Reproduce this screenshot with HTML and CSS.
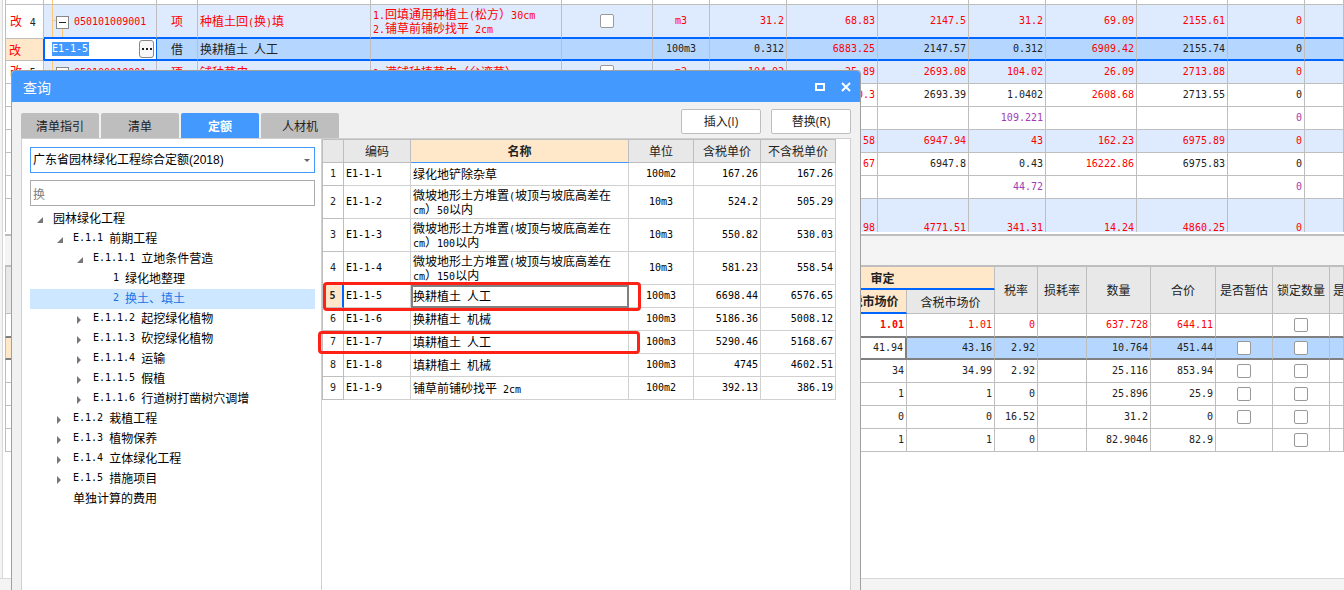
FILE: index.html
```html
<!DOCTYPE html>
<html lang="zh-CN">
<head>
<meta charset="utf-8">
<title>查询</title>
<link rel="stylesheet" href="styles.css">
</head>
<body>
<main class="app">
  <div class="gutter"></div>
  <div class="work">
    <section class="upper">
      <table class="grid bill">
        <colgroup><col class="w38"><col class="w113"><col class="w41"><col class="w173"><col class="w191"><col class="w91"><col class="w57"><col class="w77"><col class="w91"><col class="w91"><col class="w77"><col class="w91"><col class="w91"><col class="w77"><col></colgroup>
        <tbody>
        <tr class="sliver"><td></td><td><i class="branch"></i></td><td></td><td></td><td></td><td></td><td></td><td></td><td></td><td></td><td></td><td></td><td></td><td></td><td></td></tr>
        <tr class="item tall edge">
          <td class="rowno">改 <b class="n num">4</b></td>
          <td class="code"><i class="branch"></i><i class="twig"></i><i class="drop"></i><svg class="fold" viewBox="0 0 13 13"><rect x=".5" y=".5" width="12" height="12"/><path d="M3 6.5h7"/></svg><span class="n">050101009001</span></td>
          <td class="c">项</td><td>种植土回<span class="n">(</span>换<span class="n">)</span>填</td>
          <td class="lines"><span class="n">1.</span>回填通用种植土<span class="n">(</span>松方）<span class="n">30cm</span><br><span class="n">2.</span>铺草前铺砂找平<span class="n"> 2cm</span></td>
          <td class="c"><input type="checkbox" aria-label="选择第4行"></td><td class="c n">m3</td><td class="r n">31.2</td><td class="r n">68.83</td><td class="r n">2147.5</td><td class="r n">31.2</td><td class="r n">69.09</td><td class="r n">2155.61</td><td class="r n">0</td><td></td>
        </tr>
        <tr class="current edge">
          <td class="rowno mark">改</td>
          <td class="editing"><div class="editor"><input class="n" type="text" value="E1-1-5" aria-label="编码"><button type="button" aria-label="选择定额"><svg viewBox="0 0 13 16"><path d="M2 8h2M6 8h2M10 8h2"/></svg></button></div></td>
          <td class="c">借</td><td>换耕植土<span class="n"> </span>人工</td><td></td><td></td><td class="c n">100m3</td><td class="r n">0.312</td><td class="r n red">6883.25</td><td class="r n">2147.57</td><td class="r n">0.312</td><td class="r n red">6909.42</td><td class="r n">2155.74</td><td class="r n">0</td><td></td>
        </tr>
        <tr class="item">
          <td class="rowno">改 <b class="n num">5</b></td>
          <td class="code"><i class="branch"></i><svg class="fold" viewBox="0 0 13 13"><rect x=".5" y=".5" width="12" height="12"/><path d="M3 6.5h7"/></svg><span class="n">050100010001</span></td>
          <td class="c">项</td><td>铺种草皮</td><td><span class="n">1.</span>满铺种植草皮（台湾草）</td><td class="c"><input type="checkbox" aria-label="选择第5行"></td><td class="c n">m2</td><td class="r n">104.02</td><td class="r n">25.89</td><td class="r n">2693.08</td><td class="r n">104.02</td><td class="r n">26.09</td><td class="r n">2713.88</td><td class="r n">0</td><td></td>
        </tr>
        <tr><td></td><td></td><td></td><td></td><td></td><td></td><td></td><td></td><td class="r n red">2590.3</td><td class="r n">2693.39</td><td class="r n">1.0402</td><td class="r n red">2608.68</td><td class="r n">2713.55</td><td class="r n">0</td><td></td></tr>
        <tr class="purple"><td></td><td></td><td></td><td></td><td></td><td></td><td></td><td></td><td></td><td></td><td class="r n">109.221</td><td></td><td></td><td class="r n">0</td><td></td></tr>
        <tr class="item"><td class="rowno"></td><td></td><td></td><td></td><td></td><td></td><td></td><td></td><td class="r n">161.58</td><td class="r n">6947.94</td><td class="r n">43</td><td class="r n">162.23</td><td class="r n">6975.89</td><td class="r n">0</td><td></td></tr>
        <tr><td></td><td></td><td></td><td></td><td></td><td></td><td></td><td></td><td class="r n red">16157.67</td><td class="r n">6947.8</td><td class="r n">0.43</td><td class="r n red">16222.86</td><td class="r n">6975.83</td><td class="r n">0</td><td></td></tr>
        <tr class="purple"><td></td><td></td><td></td><td></td><td></td><td></td><td></td><td></td><td></td><td></td><td class="r n">44.72</td><td></td><td></td><td class="r n">0</td><td></td></tr>
        <tr class="item taller"><td class="rowno"></td><td></td><td></td><td></td><td></td><td></td><td></td><td></td><td class="r n">13.98</td><td class="r n">4771.51</td><td class="r n">341.31</td><td class="r n">14.24</td><td class="r n">4860.25</td><td class="r n">0</td><td></td></tr>
        </tbody>
      </table>
    </section>
    <div class="splitter"></div>
    <section class="lower">
      <table class="grid res">
        <colgroup><col class="w38"><col class="w727"><col class="w48"><col class="w88"><col class="w88"><col class="w43"><col class="w49"><col class="w64"><col class="w65"><col class="w57"><col class="w57"><col></colgroup>
        <thead>
        <tr class="h1"><th rowspan="2"></th><th rowspan="2"></th><th colspan="3" class="hot">审定</th><th rowspan="2">税率</th><th rowspan="2">损耗率</th><th rowspan="2">数量</th><th rowspan="2">合价</th><th rowspan="2">是否暂估</th><th rowspan="2">锁定数量</th><th rowspan="2" class="cut">是否</th></tr>
        <tr class="h2"><th></th><th class="hot">不含税市场价</th><th>含税市场价</th></tr>
        </thead>
        <tbody>
        <tr class="red grayedge"><td></td><td></td><td></td><td class="r n strong">1.01</td><td class="r n">1.01</td><td class="r n">0</td><td></td><td class="r n">637.728</td><td class="r n">644.11</td><td></td><td class="c"><input type="checkbox" aria-label="锁定数量 1"></td><td></td></tr>
        <tr class="picked grayedge"><td class="mark"></td><td></td><td></td><td class="r n cell">41.94</td><td class="r n">43.16</td><td class="r n">2.92</td><td></td><td class="r n">10.764</td><td class="r n">451.44</td><td class="c"><input type="checkbox" aria-label="是否暂估 2"></td><td class="c"><input type="checkbox" aria-label="锁定数量 2"></td><td></td></tr>
        <tr><td></td><td></td><td></td><td class="r n">34</td><td class="r n">34.99</td><td class="r n">2.92</td><td></td><td class="r n">25.116</td><td class="r n">853.94</td><td class="c"><input type="checkbox" aria-label="是否暂估 3"></td><td class="c"><input type="checkbox" aria-label="锁定数量 3"></td><td></td></tr>
        <tr><td></td><td></td><td></td><td class="r n">1</td><td class="r n">1</td><td class="r n">0</td><td></td><td class="r n">25.896</td><td class="r n">25.9</td><td class="c"><input type="checkbox" aria-label="是否暂估 4"></td><td class="c"><input type="checkbox" aria-label="锁定数量 4"></td><td></td></tr>
        <tr><td></td><td></td><td></td><td class="r n">0</td><td class="r n">0</td><td class="r n">16.52</td><td></td><td class="r n">31.2</td><td class="r n">0</td><td class="c"><input type="checkbox" aria-label="是否暂估 5"></td><td class="c"><input type="checkbox" aria-label="锁定数量 5"></td><td></td></tr>
        <tr><td></td><td></td><td></td><td class="r n">1</td><td class="r n">1</td><td class="r n">0</td><td></td><td class="r n">82.9046</td><td class="r n">82.9</td><td></td><td class="c"><input type="checkbox" aria-label="锁定数量 6"></td><td></td></tr>
        </tbody>
      </table>
    </section>
  </div>
</main>
<footer class="status"></footer>

<section class="dialog" role="dialog" aria-labelledby="dlg-title">
  <header class="titlebar">
    <h1 id="dlg-title">查询</h1>
    <button type="button" aria-label="最大化"><svg viewBox="0 0 10 8"><rect x="1" y="1" width="8" height="6"/></svg></button>
    <button type="button" aria-label="关闭"><svg viewBox="0 0 10 8"><path d="M1 0l8 8M9 0l-8 8"/></svg></button>
  </header>
  <div class="toolbar">
    <nav class="tabs"><button type="button">清单指引</button><button type="button">清单</button><button type="button" class="on">定额</button><button type="button">人材机</button></nav>
    <div class="actions"><button type="button">插入(I)</button><button type="button">替换(R)</button></div>
  </div>
  <div class="panes">
    <aside class="side">
      <div class="picker">
        <select aria-label="定额库"><option>广东省园林绿化工程综合定额(2018)</option></select>
        <svg viewBox="0 0 6 3"><path d="M0 0h6L3 3z"/></svg>
      </div>
      <input class="search" type="text" placeholder="换" aria-label="搜索">
      <ul class="tree">
        <li class="l0"><svg viewBox="0 0 6 6"><path d="M6 0v6H0z"/></svg>园林绿化工程</li>
        <li class="l1"><svg viewBox="0 0 6 6"><path d="M6 0v6H0z"/></svg><span class="n">E.1.1 </span>前期工程</li>
        <li class="l2"><svg viewBox="0 0 6 6"><path d="M6 0v6H0z"/></svg><span class="n">E.1.1.1 </span>立地条件营造</li>
        <li class="l3"><span class="n">1 </span>绿化地整理</li>
        <li class="l3 sel"><span class="n">2 </span>换土、填土</li>
        <li class="l2"><svg viewBox="0 0 6 8"><path d="M0 0l4 4-4 4z"/></svg><span class="n">E.1.1.2 </span>起挖绿化植物</li>
        <li class="l2"><svg viewBox="0 0 6 8"><path d="M0 0l4 4-4 4z"/></svg><span class="n">E.1.1.3 </span>砍挖绿化植物</li>
        <li class="l2"><svg viewBox="0 0 6 8"><path d="M0 0l4 4-4 4z"/></svg><span class="n">E.1.1.4 </span>运输</li>
        <li class="l2"><svg viewBox="0 0 6 8"><path d="M0 0l4 4-4 4z"/></svg><span class="n">E.1.1.5 </span>假植</li>
        <li class="l2"><svg viewBox="0 0 6 8"><path d="M0 0l4 4-4 4z"/></svg><span class="n">E.1.1.6 </span>行道树打凿树穴调增</li>
        <li class="l1"><svg viewBox="0 0 6 8"><path d="M0 0l4 4-4 4z"/></svg><span class="n">E.1.2 </span>栽植工程</li>
        <li class="l1"><svg viewBox="0 0 6 8"><path d="M0 0l4 4-4 4z"/></svg><span class="n">E.1.3 </span>植物保养</li>
        <li class="l1"><svg viewBox="0 0 6 8"><path d="M0 0l4 4-4 4z"/></svg><span class="n">E.1.4 </span>立体绿化工程</li>
        <li class="l1"><svg viewBox="0 0 6 8"><path d="M0 0l4 4-4 4z"/></svg><span class="n">E.1.5 </span>措施项目</li>
        <li class="l1 bare">单独计算的费用</li>
      </ul>
    </aside>
    <div class="quota">
      <table class="grid norm">
        <colgroup><col class="w22"><col class="w67"><col class="w218"><col class="w65"><col class="w67"><col class="w75"></colgroup>
        <thead><tr><th></th><th>编码</th><th class="hot">名称</th><th>单位</th><th>含税单价</th><th>不含税单价</th></tr></thead>
        <tbody>
        <tr><th class="n">1</th><td class="n">E1-1-1</td><td>绿化地铲除杂草</td><td class="c n">100m2</td><td class="r n">167.26</td><td class="r n">167.26</td></tr>
        <tr class="two"><th class="n">2</th><td class="n">E1-1-2</td><td class="lines">微坡地形土方堆置<span class="n">(</span>坡顶与坡底高差在<br><span class="n">cm</span>）<span class="n">50</span>以内</td><td class="c n">10m3</td><td class="r n">524.2</td><td class="r n">505.29</td></tr>
        <tr class="two"><th class="n">3</th><td class="n">E1-1-3</td><td class="lines">微坡地形土方堆置<span class="n">(</span>坡顶与坡底高差在<br><span class="n">cm</span>）<span class="n">100</span>以内</td><td class="c n">10m3</td><td class="r n">550.82</td><td class="r n">530.03</td></tr>
        <tr class="two"><th class="n">4</th><td class="n">E1-1-4</td><td class="lines">微坡地形土方堆置<span class="n">(</span>坡顶与坡底高差在<br><span class="n">cm</span>）<span class="n">150</span>以内</td><td class="c n">10m3</td><td class="r n">581.23</td><td class="r n">558.54</td></tr>
        <tr class="at"><th class="n">5</th><td class="n">E1-1-5</td><td class="focus">换耕植土<span class="n"> </span>人工</td><td class="c n">100m3</td><td class="r n">6698.44</td><td class="r n">6576.65</td></tr>
        <tr><th class="n">6</th><td class="n">E1-1-6</td><td>换耕植土<span class="n"> </span>机械</td><td class="c n">100m3</td><td class="r n">5186.36</td><td class="r n">5008.12</td></tr>
        <tr><th class="n">7</th><td class="n">E1-1-7</td><td>填耕植土<span class="n"> </span>人工</td><td class="c n">100m3</td><td class="r n">5290.46</td><td class="r n">5168.67</td></tr>
        <tr><th class="n">8</th><td class="n">E1-1-8</td><td>填耕植土<span class="n"> </span>机械</td><td class="c n">100m3</td><td class="r n">4745</td><td class="r n">4602.51</td></tr>
        <tr><th class="n">9</th><td class="n">E1-1-9</td><td>铺草前铺砂找平<span class="n"> 2cm</span></td><td class="c n">100m2</td><td class="r n">392.13</td><td class="r n">386.19</td></tr>
        </tbody>
      </table>
      <div class="ring ring-a"></div>
      <div class="ring ring-b"></div>
    </div>
  </div>
</section>
</body>
</html>
```

FILE: styles.css
```css
* { box-sizing: border-box; }
html, body { height: 100%; }
body {
  margin: 0;
  display: flex;
  flex-direction: column;
  position: relative;
  overflow: hidden;
  background: #fff;
  color: #222;
  font: 12px/14px "Noto Sans CJK SC", sans-serif;
}
button, input, select { font: inherit; color: inherit; margin: 0; padding: 0; }
.n { font-family: "DejaVu Sans Mono", "Noto Sans CJK SC", monospace; font-size: 10px; white-space: pre; }
.red, .red td { color: #f00; }

.app { flex: 1; display: flex; min-height: 0; }
.gutter { width: 3px; background: #f4f4f4; border-right: 1px solid #d8d8d8; }
.work { flex: 1; min-width: 0; margin-left: 2px; display: flex; flex-direction: column; }
.upper { height: 232px; overflow: hidden; }
.splitter { height: 33px; margin-top: 2px; background: #f4f4f4; border-top: 2px solid #bebebe; border-bottom: 2px solid #bebebe; }
.lower { flex: 1; overflow: hidden; }
.status { height: 12px; background: #f4f4f4; border-top: 1px solid #d8d8d8; }

.grid { table-layout: fixed; border-collapse: separate; border-spacing: 0; width: 100%; }
.grid tr { height: 23px; }
.grid td, .grid th {
  padding: 0 2px;
  border: 0 solid #bebebe;
  border-right-width: 1px;
  border-bottom-width: 1px;
  text-align: left;
  font-weight: 400;
  white-space: nowrap;
  overflow: hidden;
  line-height: 14px;
}
.grid td span.n { line-height: 1px; }
.grid td:first-child, .grid tr:first-child th:first-child { border-left-width: 1px; }
.grid thead th { background: #e8e8e8; text-align: center; padding: 0; }
.grid thead th.hot { background: #ffe7ca; font-weight: 700; border-bottom-color: #06f; }
.grid .r { text-align: right; }
.grid .c { text-align: center; }
.w22 { width: 22px; } .w38 { width: 39px; } .w41 { width: 41px; } .w43 { width: 43px; }
.w48 { width: 48px; } .w49 { width: 49px; } .w57 { width: 57px; } .w64 { width: 64px; }
.w65 { width: 65px; } .w67 { width: 67px; } .w75 { width: 75px; } .w77 { width: 77px; }
.w88 { width: 88px; } .w91 { width: 91px; } .w113 { width: 113px; } .w173 { width: 173px; }
.w191 { width: 191px; } .w218 { width: 218px; } .w727 { width: 727px; }

input[type="checkbox"] {
  appearance: none;
  display: block;
  width: 14px;
  height: 14px;
  margin: 0 auto;
  background: #fff;
  border: 1px solid #999;
  border-radius: 2px;
}

.bill .sliver { height: 5px; }
.bill .sliver td { line-height: 0; }
.bill .tall { height: 34px; }
.bill .taller { height: 58px; }
.bill .item td { background: #deeafe; color: #f00; }
.bill .item td.rowno { background: #fff; }
.bill .rowno { padding-left: 4px; color: #f00; }
.bill .num { margin-left: 5px; color: #222; font-weight: 400; }
.bill .edge td { border-bottom: 2px solid #06f; }
.bill .edge td.rowno { border-bottom: 1px solid #bebebe; }
.bill .current { height: 22px; }
.bill .current td { background: #b4d6ff; }
.grid td.mark, .bill .current td.mark { background: #ffe7ca; }
.bill .current td.mark { padding-left: 3px; color: #f00; border-right-color: #06f; }
.bill .current td.editing { background: #fff; border-left: 1px solid #06f; border-right-color: #06f; padding: 0 2px 0 7px; }
.bill .purple td { color: #a23cb4; }
.bill td { position: relative; }
.bill .code { padding-left: 12px; }
.fold { display: inline-block; width: 13px; height: 13px; margin-right: 5px; vertical-align: middle; position: relative; }
.fold rect { fill: #fff; stroke: #888; }
.fold path { stroke: #222; }
.branch { position: absolute; left: 8px; top: 0; bottom: 0; width: 1px; background: #ffc878; }
.twig { position: absolute; left: 8px; top: 15px; width: 5px; height: 1px; background: #ffc878; }
.drop { position: absolute; left: 18px; top: 22px; bottom: 0; width: 1px; background: #ffc878; }
.editor { display: flex; justify-content: space-between; align-items: center; }
.editor input { width: 37px; height: 14px; border: 0; background: #49f; color: #fff; }
.editor button { width: 15px; height: 18px; background: #f8f8f8; border: 1px solid #888; border-radius: 3px; display: flex; }
.editor svg { width: 13px; height: 16px; stroke: #222; stroke-width: 2; }

.res .h1 th.hot, .res .h2 th.hot { border-bottom: 2px solid #06f; }
.res .h2 { height: 24px; }
.res .cut { text-align: left; padding-left: 3px; }
.res .grayedge td { border-bottom: 2px solid #808080; }
.res .red { height: 24px; }
.res .picked { height: 22px; }
.res .picked td { background: #b4d6ff; }
.res .picked td.mark { background: #ffe7ca; }
.res .picked td.cell { background: #fff; border-right: 2px solid #808080; }
.res .strong { font-weight: 700; }

.dialog {
  position: absolute;
  left: 11px;
  top: 70px;
  bottom: 0;
  width: 850px;
  display: flex;
  flex-direction: column;
  background: #f1f1f1;
  border: 1px solid #a0a0a0;
  border-bottom: 0;
  border-radius: 4px 4px 0 0;
  overflow: hidden;
}
.titlebar { height: 31px; display: flex; align-items: center; gap: 16px; padding: 0 9px 0 11px; background: #49f; color: #fff; }
.titlebar h1 { margin: 0; flex: 1; font-size: 14px; font-weight: 400; line-height: 20px; }
.titlebar button { width: 10px; height: 10px; border: 0; background: none; display: flex; align-items: center; }
.titlebar svg { width: 10px; height: 8px; fill: none; stroke: #fff; stroke-width: 2; overflow: visible; }
.toolbar { height: 36px; display: flex; justify-content: space-between; padding: 0 9px; }
.tabs { display: flex; gap: 2px; align-items: flex-end; }
.tabs button { width: 78px; height: 25px; border: 0; border-radius: 2px 2px 0 0; background: #bebebe; color: #222; }
.tabs .on { background: #49f; color: #fff; font-weight: 700; }
.actions { display: flex; gap: 10px; padding-top: 7px; }
.actions button { width: 80px; height: 25px; background: #fff; border: 1px solid #bebebe; border-radius: 2px; font-family: "Open Sans", "Noto Sans CJK SC", sans-serif; }
.panes { flex: 1; display: flex; margin: 0 9px; background: #fff; border: 1px solid #d0d0d0; border-bottom: 0; min-height: 0; }
.side { width: 300px; padding: 8px 6px 0 8px; border-right: 1px solid #d0d0d0; color: #000; }
.picker { display: grid; align-items: center; }
.picker select { grid-area: 1 / 1; width: 100%; height: 26px; padding: 0 2px; appearance: none; background: #fff; border: 1px solid #49f; border-radius: 0; font-family: "Liberation Sans", "Noto Sans CJK SC", sans-serif; }
.picker svg { grid-area: 1 / 1; justify-self: end; width: 6px; height: 3px; margin-right: 5px; fill: #666; pointer-events: none; }
.search { display: block; width: 100%; height: 26px; margin-top: 7px; padding: 0 2px; border: 1px solid #aaa; background: #fff; }
.search::placeholder { color: #808080; opacity: 1; }
.tree { list-style: none; margin: 3px 0 0; padding: 0; }
.tree li { height: 20px; display: flex; align-items: center; line-height: 18px; padding-bottom: 2px; }
.tree svg { width: 6px; height: 8px; margin: 3px 10px 0 0; fill: #777; }
.l0 { padding-left: 7px; }
.l1 { padding-left: 27px; }
.l2 { padding-left: 47px; }
.l3 { padding-left: 83px; }
.l1.bare { padding-left: 43px; }
.tree .sel { background: #cce7ff; color: #1a73e8; }

.quota { position: relative; width: 514px; align-self: flex-start; color: #000; }
.norm thead tr { height: 24px; }
.norm thead th { border-top-width: 1px; color: #222; }
.grid.norm thead th.hot { border-bottom-color: #49f; }
.norm td { border-color: #d0d0d0; }
.grid.norm tbody th { border-left-width: 1px; text-align: center; padding: 0; color: #222; }
.grid.norm td:first-child { border-left: 0; }
.norm .two { height: 33px; }
.grid.norm .at th { background: #ffe7ca; border-right: 2px solid #06f; font-weight: 700; }
.grid.norm td.focus { position: relative; outline: 2px solid #808080; outline-offset: -2px; }
.ring { position: absolute; border: 3px solid #fd2116; border-radius: 4px; }
.ring-a { left: 1px; top: 143px; width: 318px; height: 29px; }
.ring-b { left: -4px; top: 192px; width: 322px; height: 23px; }
```
